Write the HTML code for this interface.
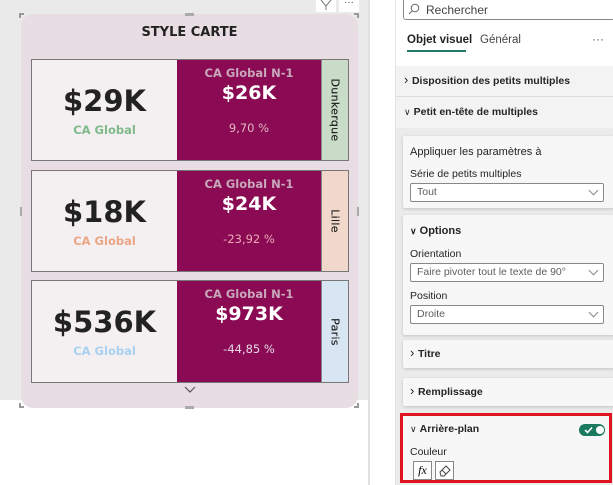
<!DOCTYPE html>
<html><head><meta charset="utf-8"><style>
*{margin:0;padding:0;box-sizing:border-box}
body{width:613px;height:485px;overflow:hidden;background:#fff;font-family:"Liberation Sans",sans-serif;position:relative}
.a{position:absolute}
.v{font-family:"DejaVu Sans",sans-serif;font-weight:bold}
.t{font-size:11px;color:#252423;white-space:nowrap}
.b{font-weight:bold}
.card{background:#f7f7f7;box-shadow:0 1px 3px rgba(0,0,0,.18);border-radius:2px}
.dd{background:#fff;border:1px solid #8a8886;border-radius:2px;font-size:10.5px;color:#605e5c;padding:2px 6px}
.chev{position:absolute;right:6px;top:3px;width:7px;height:7px;border-right:1px solid #888;border-bottom:1px solid #888;transform:rotate(45deg)}
.side{font-size:11px;color:#222;font-family:'DejaVu Sans',sans-serif;white-space:nowrap;letter-spacing:.3px;text-shadow:0 0 .3px #222}
.big{font-size:29px;color:#222}
.mid{font-size:19px;color:#fff}
</style></head><body>
<div class="a" style="left:0;top:0;width:368px;height:400px;background:#eaeaea"></div>
<div class="a" style="left:368px;top:0;width:2px;height:485px;background:#e0e0e0"></div>
<div class="a" style="left:396px;top:0;width:217px;height:485px;background:#f3f3f3"></div>
<div class="a" style="left:395px;top:0;width:1px;height:485px;background:#e3e3e3"></div>
<div class="a" style="left:316px;top:0;width:20px;height:12px;background:#fff"></div>
<svg class="a" style="left:320px;top:0" width="12" height="10"><path d="M1 0 L6 6 L6 10 M11 0 L6 6" stroke="#777" fill="none"/></svg>
<div class="a" style="left:339px;top:0;width:20px;height:12px;background:#fff;font-size:10px;color:#555;text-align:center;line-height:6px">···</div>
<div class="a" style="left:21px;top:14px;width:337px;height:394px;background:#e8dde2;border-radius:12px"></div>
<div class="a" style="left:19px;top:13px;width:5px;height:5px;border-left:2px solid #999;border-top:2px solid #999"></div>
<div class="a" style="left:354px;top:13px;width:5px;height:5px;border-right:2px solid #999;border-top:2px solid #999"></div>
<div class="a" style="left:19px;top:403px;width:5px;height:5px;border-left:2px solid #999;border-bottom:2px solid #999"></div>
<div class="a" style="left:354px;top:403px;width:5px;height:5px;border-right:2px solid #999;border-bottom:2px solid #999"></div>
<div class="a" style="left:185px;top:13px;width:9px;height:3px;background:#aaa"></div>
<div class="a" style="left:185px;top:406px;width:9px;height:3px;background:#aaa"></div>
<div class="a" style="left:20px;top:207px;width:2px;height:9px;background:#aaa"></div>
<div class="a" style="left:357px;top:207px;width:2px;height:9px;background:#aaa"></div>
<div class="a v" style="left:21px;top:25px;width:337px;text-align:center;font-size:13px;color:#222">STYLE CARTE</div>

<div class="a" style="left:31px;top:59px;width:318px;height:102px;border:1px solid #777;background:#f4f0f2"></div>
<div class="a" style="left:177px;top:60px;width:144px;height:100px;background:#8a0b53"></div>
<div class="a" style="left:321px;top:60px;width:27px;height:100px;background:#c8dcc8;border-left:1px solid #888"></div>
<div class="a v big" style="left:32px;top:84px;width:145px;text-align:center">$29K</div>
<div class="a v" style="left:32px;top:123px;width:145px;text-align:center;font-size:11.5px;color:#7fb98a">CA Global</div>
<div class="a v" style="left:177px;top:66px;width:144px;text-align:center;font-size:11.5px;color:#c8a8bb">CA Global N-1</div>
<div class="a v mid" style="left:177px;top:82px;width:144px;text-align:center">$26K</div>
<div class="a" style="left:177px;top:121px;width:144px;text-align:center;font-size:11.5px;color:#e4b6c6;font-family:'DejaVu Sans',sans-serif">9,70 %</div>
<div class="a side" style="left:335px;top:110px;transform:translate(-50%,-50%) rotate(90deg)">Dunkerque</div>

<div class="a" style="left:31px;top:170px;width:318px;height:102px;border:1px solid #777;background:#f4f0f2"></div>
<div class="a" style="left:177px;top:171px;width:144px;height:100px;background:#8a0b53"></div>
<div class="a" style="left:321px;top:171px;width:27px;height:100px;background:#f2d8cb;border-left:1px solid #888"></div>
<div class="a v big" style="left:32px;top:195px;width:145px;text-align:center">$18K</div>
<div class="a v" style="left:32px;top:234px;width:145px;text-align:center;font-size:11.5px;color:#eba785">CA Global</div>
<div class="a v" style="left:177px;top:177px;width:144px;text-align:center;font-size:11.5px;color:#c8a8bb">CA Global N-1</div>
<div class="a v mid" style="left:177px;top:193px;width:144px;text-align:center">$24K</div>
<div class="a" style="left:177px;top:232px;width:144px;text-align:center;font-size:11.5px;color:#f0a8b8;font-family:'DejaVu Sans',sans-serif">-23,92 %</div>
<div class="a side" style="left:335px;top:221px;transform:translate(-50%,-50%) rotate(90deg)">Lille</div>

<div class="a" style="left:31px;top:280px;width:318px;height:103px;border:1px solid #777;background:#f4f0f2"></div>
<div class="a" style="left:177px;top:281px;width:144px;height:101px;background:#8a0b53"></div>
<div class="a" style="left:321px;top:281px;width:27px;height:101px;background:#d8e6f4;border-left:1px solid #888"></div>
<div class="a v big" style="left:32px;top:305px;width:145px;text-align:center">$536K</div>
<div class="a v" style="left:32px;top:344px;width:145px;text-align:center;font-size:11.5px;color:#a8d0f0">CA Global</div>
<div class="a v" style="left:177px;top:287px;width:144px;text-align:center;font-size:11.5px;color:#c8a8bb">CA Global N-1</div>
<div class="a v mid" style="left:177px;top:303px;width:144px;text-align:center">$973K</div>
<div class="a" style="left:177px;top:342px;width:144px;text-align:center;font-size:11.5px;color:#e8d8e8;font-family:'DejaVu Sans',sans-serif">-44,85 %</div>
<div class="a side" style="left:335px;top:332px;transform:translate(-50%,-50%) rotate(90deg)">Paris</div>
<svg class="a" style="left:184px;top:386px" width="12" height="8"><path d="M1 1 L6 6 L11 1" stroke="#555" fill="none" stroke-width="1.2"/></svg>

<div class="a" style="left:396px;top:0;width:217px;height:66px;background:#fff"></div>
<div class="a" style="left:403px;top:-2px;width:212px;height:22px;border:1px solid #8a8886;border-radius:3px;background:#fff"></div>
<svg class="a" style="left:408px;top:3px" width="12" height="12"><circle cx="7" cy="5" r="3.8" stroke="#666" fill="none"/><path d="M4.3 7.7 L1 11" stroke="#666"/></svg>
<div class="a t" style="left:426px;top:3px;font-size:12px;color:#444">Rechercher</div>
<div class="a t b" style="left:407px;top:34px;font-size:11.5px">Objet visuel</div>
<div class="a t" style="left:480px;top:34px;font-size:11.5px;color:#444">Général</div>
<div class="a t" style="left:592px;top:32px;font-size:12px;color:#555">···</div>
<div class="a" style="left:407px;top:50px;width:59px;height:2px;background:#217a6a"></div>
<div class="a" style="left:396px;top:96px;width:217px;height:1px;background:#ddd"></div>
<div class="a t" style="left:404px;top:72px;font-size:13px">›&nbsp;<span class="b" style="font-size:10.5px">Disposition des petits multiples</span></div>
<div class="a t" style="left:404px;top:106px"><span style="font-size:9px">∨</span> <span class="b" style="font-size:10.5px">Petit en-tête de multiples</span></div>
<div class="a" style="left:396px;top:128px;width:217px;height:357px;background:#ebebeb"></div>

<div class="a card" style="left:403px;top:136px;width:212px;height:72px"></div>
<div class="a t" style="left:410px;top:146px">Appliquer les paramètres à</div>
<div class="a t" style="left:410px;top:168px;font-size:10.5px">Série de petits multiples</div>
<div class="a dd" style="left:410px;top:183px;width:194px;height:19px">Tout<span class="chev"></span></div>

<div class="a card" style="left:403px;top:215px;width:212px;height:120px"></div>
<div class="a t b" style="left:410px;top:225px"><span style="font-size:9px">∨</span> Options</div>
<div class="a t" style="left:410px;top:248px;font-size:10.5px">Orientation</div>
<div class="a dd" style="left:410px;top:263px;width:194px;height:19px">Faire pivoter tout le texte de 90°<span class="chev"></span></div>
<div class="a t" style="left:410px;top:290px;font-size:10.5px">Position</div>
<div class="a dd" style="left:410px;top:305px;width:194px;height:19px">Droite<span class="chev"></span></div>

<div class="a card" style="left:403px;top:340px;width:212px;height:28px"></div>
<div class="a t" style="left:410px;top:345px;font-size:13px">›&nbsp;<span class="b" style="font-size:10.5px">Titre</span></div>
<div class="a card" style="left:403px;top:378px;width:212px;height:28px"></div>
<div class="a t" style="left:410px;top:383px;font-size:13px">›&nbsp;<span class="b" style="font-size:10.5px">Remplissage</span></div>

<div class="a" style="left:400px;top:413px;width:212px;height:70px;border:3px solid #e0141e;background:#f7f7f7"></div>
<div class="a t" style="left:410px;top:423px"><span style="font-size:9px">∨</span> <span class="b" style="font-size:10.5px">Arrière-plan</span></div>
<div class="a" style="left:579px;top:424px;width:26px;height:12px;border-radius:6px;background:#1b7a5e"></div>
<div class="a" style="left:596px;top:426px;width:8px;height:8px;border-radius:4px;background:#fff"></div>
<svg class="a" style="left:584px;top:426px" width="9" height="8"><path d="M1 4 L3.5 6.5 L8 1.5" stroke="#fff" stroke-width="1.6" fill="none"/></svg>
<div class="a t" style="left:410px;top:446px;font-size:10.5px">Couleur</div>
<div class="a" style="left:413px;top:461px;width:19px;height:19px;border:1px solid #888;background:#fff;font-family:'Liberation Serif',serif;font-style:italic;font-size:12px;text-align:center;line-height:17px">fx</div>
<div class="a" style="left:435px;top:461px;width:19px;height:19px;border:1px solid #888;background:#fff"></div>
<svg class="a" style="left:437px;top:463px" width="15" height="15"><path d="M3 9 L9 3 L13 7 L7 13 L4 13 Z M5 7 L9 11" stroke="#444" fill="none"/></svg>
</body></html>
